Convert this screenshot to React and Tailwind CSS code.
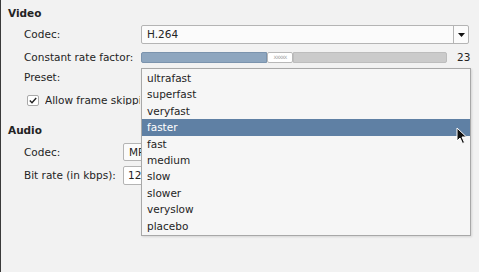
import React from "react";

const presets = ["ultrafast","superfast","veryfast","faster","fast","medium","slow","slower","veryslow","placebo"];

function Cursor() {
  return (
    <svg width="13" height="18" viewBox="0 0 13 18" className="absolute left-[455px] top-[127px]">
      <path d="M1 1 L1 14 L4 11 L6.5 16.5 L8.5 15.5 L6 10 L10.5 10 Z" fill="#111" stroke="#fff" strokeWidth="1" strokeLinejoin="round" />
    </svg>
  );
}

export default function App() {
  return (
    <div className="relative w-[479px] h-[272px] overflow-hidden bg-[#f2f2f2] border-l border-[#3a3a3a] text-[#242424] text-[10.5px] leading-none" style={{ fontFamily: '"DejaVu Sans", sans-serif' }}>
      <div className="flex flex-col pl-[7px] pt-[4px]">
        <div className="h-[18px] flex items-center font-bold">Video</div>
        <div className="flex flex-col pl-[16px]">
          <div className="mt-[3px] h-[19px] flex items-center">
            <div className="w-[117px]">Codec:</div>
            <div className="w-[328px] h-[19px] flex items-center bg-[#fbfbfb] border border-[#b4b4b4] rounded-[2px]">
              <div className="flex-1 pl-[5px]">H.264</div>
              <div className="w-[15px] h-full border-l border-[#b4b4b4] flex items-center justify-center">
                <svg width="7" height="4" viewBox="0 0 7 4"><path d="M0 0 L7 0 L3.5 4 Z" fill="#111" /></svg>
              </div>
            </div>
          </div>
          <div className="mt-[3px] h-[20px] flex items-center">
            <div className="w-[117px]">Constant rate factor:</div>
            <div className="w-[306px] h-[11px] flex items-stretch">
              <div className="w-[126px] bg-[#8ea6bf] border border-[#7b93ad] rounded-l-[2px]" />
              <div className="w-[26px] bg-white border border-[#b8b8b8] rounded-[2px] flex items-center justify-center text-[6px] text-[#aaa] tracking-[-1px]">xxxxx</div>
              <div className="flex-1 bg-[#cbcbcb] border border-[#bdbdbd] rounded-r-[2px]" />
            </div>
            <div className="ml-[10px]">23</div>
          </div>
          <div className="mt-[1px] h-[19px] flex items-center">
            <div className="w-[117px]">Preset:</div>
          </div>
          <div className="mt-[4px] h-[18px] flex items-center pl-[3px]">
            <div className="w-[12px] h-[11px] bg-white border border-[#a9a9a9] rounded-[2px] flex items-center justify-center">
              <svg width="8" height="7" viewBox="0 0 8 7"><path d="M0.8 3.6 L3 5.8 L7.2 1" fill="none" stroke="#222" strokeWidth="1.4" /></svg>
            </div>
            <div className="ml-[6px] w-[95px] overflow-hidden whitespace-nowrap">Allow frame skipping</div>
          </div>
        </div>
        <div className="mt-[12px] h-[18px] flex items-center font-bold">Audio</div>
        <div className="flex flex-col pl-[16px]">
          <div className="mt-[4px] h-[18px] flex items-center">
            <div className="w-[99px]">Codec:</div>
            <div className="w-[18px] h-[18px] overflow-hidden">
              <div className="w-[120px] h-[18px] flex items-center pl-[5px] bg-[#fbfbfb] border border-[#b4b4b4] rounded-[2px] whitespace-nowrap">MP</div>
            </div>
          </div>
          <div className="mt-[5px] h-[19px] flex items-center">
            <div className="w-[99px]">Bit rate (in kbps):</div>
            <div className="w-[18px] h-[19px] overflow-hidden">
              <div className="w-[120px] h-[19px] flex items-center pl-[4px] bg-white border border-[#b4b4b4] rounded-[2px]">12</div>
            </div>
          </div>
        </div>
      </div>

      <div className="absolute left-[140px] top-[68px] w-[330px] h-[168px] bg-[#f6f6f6] border border-[#a8a8a8] shadow-[1px_1px_2px_rgba(0,0,0,0.12)] flex flex-col py-[1px]">
        {presets.map((p) => (
          <div key={p} className={"h-[16.6px] flex items-center pl-[5px] " + (p === "faster" ? "bg-[#5f80a4] text-white" : "")}>{p}</div>
        ))}
      </div>
      <Cursor />
    </div>
  );
}
